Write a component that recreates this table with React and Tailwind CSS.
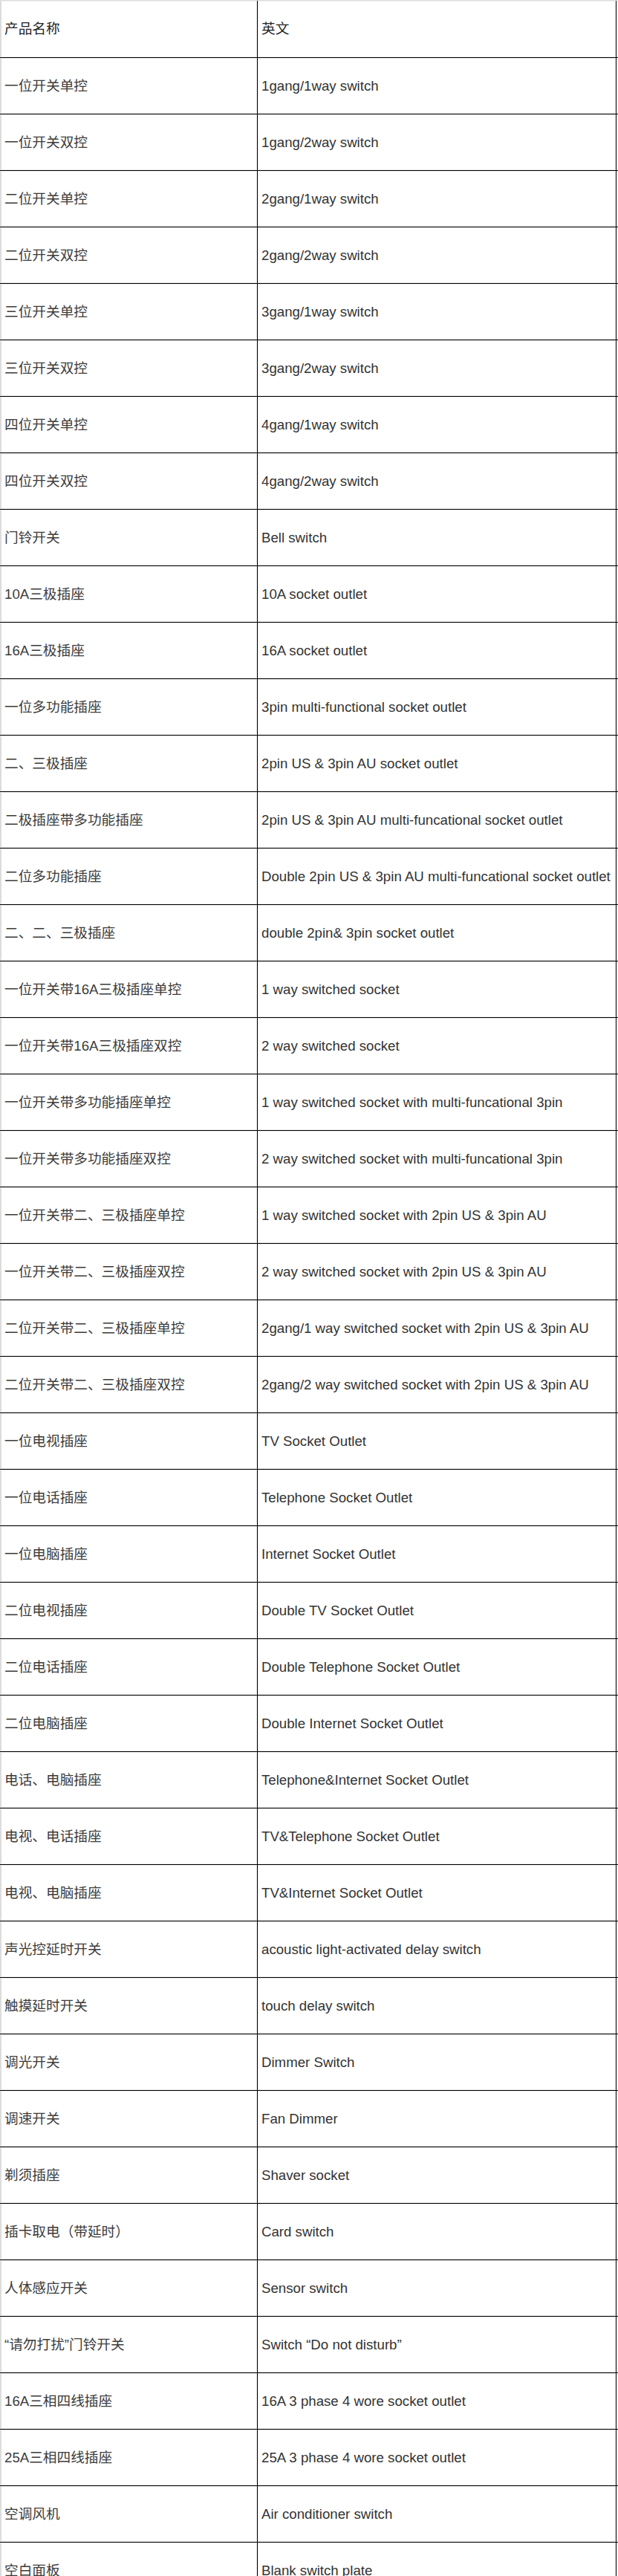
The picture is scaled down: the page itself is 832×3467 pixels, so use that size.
const rows = [
  ['一位开关单控', '1gang/1way switch'],
  ['一位开关双控', '1gang/2way switch'],
  ['二位开关单控', '2gang/1way switch'],
  ['二位开关双控', '2gang/2way switch'],
  ['三位开关单控', '3gang/1way switch'],
  ['三位开关双控', '3gang/2way switch'],
  ['四位开关单控', '4gang/1way switch'],
  ['四位开关双控', '4gang/2way switch'],
  ['门铃开关', 'Bell switch'],
  ['10A三极插座', '10A socket outlet'],
  ['16A三极插座', '16A socket outlet'],
  ['一位多功能插座', '3pin multi-functional socket outlet'],
  ['二、三极插座', '2pin US & 3pin AU socket outlet'],
  ['二极插座带多功能插座', '2pin US & 3pin AU multi-funcational socket outlet'],
  ['二位多功能插座', 'Double 2pin US & 3pin AU multi-funcational socket outlet'],
  ['二、二、三极插座', 'double 2pin& 3pin socket outlet'],
  ['一位开关带16A三极插座单控', '1 way switched socket'],
  ['一位开关带16A三极插座双控', '2 way switched socket'],
  ['一位开关带多功能插座单控', '1 way switched socket with multi-funcational 3pin'],
  ['一位开关带多功能插座双控', '2 way switched socket with multi-funcational 3pin'],
  ['一位开关带二、三极插座单控', '1 way switched socket with 2pin US & 3pin AU'],
  ['一位开关带二、三极插座双控', '2 way switched socket with 2pin US & 3pin AU'],
  ['二位开关带二、三极插座单控', '2gang/1 way switched socket with 2pin US & 3pin AU'],
  ['二位开关带二、三极插座双控', '2gang/2 way switched socket with 2pin US & 3pin AU'],
  ['一位电视插座', 'TV Socket Outlet'],
  ['一位电话插座', 'Telephone Socket Outlet'],
  ['一位电脑插座', 'Internet Socket Outlet'],
  ['二位电视插座', 'Double TV Socket Outlet'],
  ['二位电话插座', 'Double Telephone Socket Outlet'],
  ['二位电脑插座', 'Double Internet Socket Outlet'],
  ['电话、电脑插座', 'Telephone&Internet Socket Outlet'],
  ['电视、电话插座', 'TV&Telephone Socket Outlet'],
  ['电视、电脑插座', 'TV&Internet Socket Outlet'],
  ['声光控延时开关', 'acoustic light-activated delay switch'],
  ['触摸延时开关', 'touch delay switch'],
  ['调光开关', 'Dimmer Switch'],
  ['调速开关', 'Fan Dimmer'],
  ['剃须插座', 'Shaver socket'],
  ['插卡取电（带延时）', 'Card switch'],
  ['人体感应开关', 'Sensor switch'],
  ['“请勿打扰”门铃开关', 'Switch “Do not disturb”'],
  ['16A三相四线插座', '16A 3 phase 4 wore socket outlet'],
  ['25A三相四线插座', '25A 3 phase 4 wore socket outlet'],
  ['空调风机', 'Air conditioner switch'],
  ['空白面板', 'Blank switch plate'],
];

function Row({ zh, en, header }) {
  return (
    <div
      className={
        'flex h-[76px] border-b border-black ' +
        (header ? 'box-content border-t border-t-[#dcdcdc]' : '')
      }
    >
      {/* 中文 */}
      <div className="flex w-[346px] shrink-0 items-center border border-[#efefef] border-l-2 border-l-[#dcdcdc] pl-[4px]">
        <span className={header ? 'text-[#222]' : 'text-[#3c3c3c]'}>{zh}</span>
      </div>
      {/* English */}
      <div className="flex w-[484px] shrink-0 items-center border-l border-black">
        <div className="flex h-full flex-1 items-center border border-[#efefef] pl-[4px] whitespace-nowrap">
          <span className={header ? 'text-[#222]' : 'text-[#333]'}>{en}</span>
        </div>
        <div className="h-full w-[1px] bg-black" />
      </div>
    </div>
  );
}

export default function App() {
  return (
    <div className="min-h-screen w-[832px] bg-white font-['Liberation_Sans','Noto_Sans_CJK_SC',sans-serif] text-[18.67px] leading-[22px]">
      <Row zh="产品名称" en="英文" header />
      {rows.map(([zh, en], i) => (
        <Row key={i} zh={zh} en={en} />
      ))}
    </div>
  );
}
